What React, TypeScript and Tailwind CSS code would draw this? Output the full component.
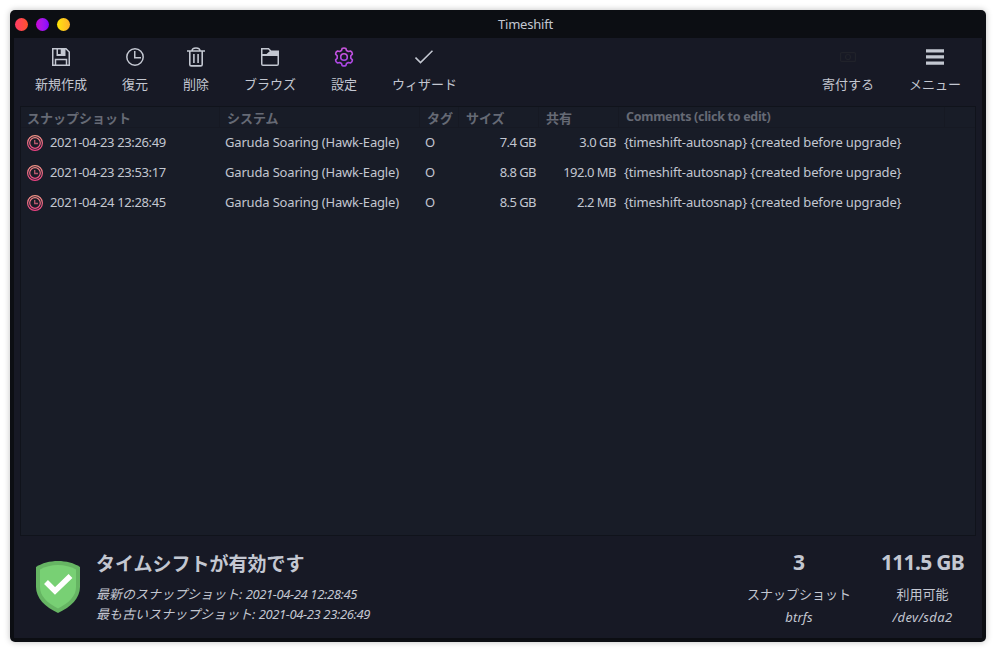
import React from 'react';

const latin = "font-['Noto_Sans','Noto_Sans_CJK_JP',sans-serif]";
const cjk = "font-['Noto_Sans_CJK_JP',sans-serif]";

function SaveIcon() {
  return (
    <svg width="18" height="18" viewBox="0 0 18 18" fill="none" stroke="currentColor" strokeWidth="1.5">
      <path d="M.75.75H14L17.25 4v13.25H.75z" />
      <path d="M3.5 17v-5.5h11V17" />
      <path d="M4.500 1h9v7h-9z" fill="currentColor" stroke="none" />
      <path d="M6 1.500h2.700V6H6z" fill="#171925" stroke="none" />
    </svg>
  );
}

function ClockIcon() {
  return (
    <svg width="18" height="18" viewBox="0 0 18 18" fill="none" stroke="currentColor" strokeWidth="1.5">
      <circle cx="9" cy="9" r="8.2" />
      <path d="M8.75 3v6.75H15" />
    </svg>
  );
}

function TrashIcon() {
  return (
    <svg width="18" height="20" viewBox="0 0 18 20" fill="none" stroke="currentColor" strokeWidth="1.6">
      <path d="M0 4h18M5 4c0-4 8-4 8 0M2.8 4v13.4c0 1 .5 1.5 1.5 1.5h9.4c1 0 1.5-.5 1.5-1.5V4M6.9 7v9M11.1 7v9" />
    </svg>
  );
}

function FolderIcon() {
  return (
    <svg width="18" height="18" viewBox="0 0 18 18" fill="none" stroke="currentColor" strokeWidth="1.5">
      <path d="M.75 16V.75H7.5L10 3.25h7.25V16q0 1.25-1.25 1.25H2Q.75 17.25.75 16z" />
      <path d="M1 6h4.5L9 3h8v5H1z" fill="currentColor" stroke="none" />
    </svg>
  );
}

function GearIcon() {
  return (
    <svg width="20" height="20" viewBox="0 0 20 20" fill="none" stroke="url(#gear)" strokeWidth="1.6" strokeLinejoin="round">
      <defs>
        <linearGradient id="gear" x1="0" y1="1" x2="0" y2="0">
          <stop stopColor="#a844e6" />
          <stop offset="1" stopColor="#c955dc" />
        </linearGradient>
      </defs>
      <path d="M8.1 1.500Q10 .5 11.900 1.500l.6 2 1.800 1 2.200-.5q1.900 1.100 1.900 3.100l-1.600 1.700v2.400l1.600 1.700q0 2-1.900 3.100l-2.200-.5-1.800 1-.6 2q-1.900 1-3.800 0l-.6-2-1.800-1-2.200.5q-1.900-1.100-1.900-3.100l1.600-1.700V8.800L1.600 7.100q0-2 1.900-3.100l2.200.5 1.800-1z" />
      <circle cx="10" cy="10" r="3.300" />
    </svg>
  );
}

function CheckIcon() {
  return (
    <svg width="18" height="14" viewBox="0 0 18 14" fill="none" stroke="currentColor" strokeWidth="1.6" className="mr-[1px]">
      <path d="M.5 7.500l5 5L17.500.700" />
    </svg>
  );
}

function CashIcon() {
  return (
    <svg width="16" height="10" viewBox="0 0 16 10" fill="none" stroke="#20222a" strokeWidth="1.200">
      <rect x=".6" y=".6" width="14.800" height="8.800" rx="1" />
      <circle cx="8" cy="5" r="2.500" />
    </svg>
  );
}

function MenuIcon() {
  return (
    <svg width="18" height="16" viewBox="0 0 18 16" fill="currentColor">
      <path d="M0 .2h18v3.300H0zM0 6.300h18v3.300H0zM0 12.400h18v3.300H0z" />
    </svg>
  );
}

function SnapshotIcon() {
  return (
    <svg width="16" height="16" viewBox="0 0 16 16" fill="none" stroke="url(#snap)" className="shrink-0">
      <defs>
        <linearGradient id="snap" gradientUnits="userSpaceOnUse" x1="0" y1="0" x2="0" y2="16">
          <stop stopColor="#ee9585" />
          <stop offset="1" stopColor="#ed3f83" />
        </linearGradient>
      </defs>
      <circle cx="8" cy="8" r="7.400" strokeWidth="1.200" />
      <circle cx="8" cy="8" r="5.300" strokeWidth="1.200" />
      <path d="M7.700 5v3.500H11" strokeWidth="1.300" opacity=".75" />
    </svg>
  );
}

function ShieldIcon() {
  return (
    <svg width="44" height="52" viewBox="0 0 44 52">
      <path d="M0 6C12-2 32-2 44 6v20c0 11-9 20-22 26C9 46 0 37 0 26z" fill="#66b563" />
      <path d="M4 8.500c10-6 26-6 36 0V26c0 9-7 16-18 21.500C11 42 4 35 4 26z" fill="#78d074" />
      <path d="M10 21l9 9 15.500-15" fill="none" stroke="#fff" strokeWidth="5.500" />
    </svg>
  );
}

function ToolButton({ label, children }: { label: string; children: React.ReactNode }) {
  return (
    <button className="flex flex-col items-center">
      <span className="flex h-[38px] items-center justify-center">{children}</span>
      <span className={`${cjk} text-[13px] leading-4 whitespace-nowrap`}>{label}</span>
    </button>
  );
}

const columns = 'grid grid-cols-[199px_200px_39px_80px_80px_326px_1fr]';
const headings = ['スナップショット', 'システム', 'タグ', 'サイズ', '共有'];

const snapshots = [
  { date: '2021-04-23 23:26:49', size: '7.4 GB', shared: '3.0 GB' },
  { date: '2021-04-23 23:53:17', size: '8.8 GB', shared: '192.0 MB' },
  { date: '2021-04-24 12:28:45', size: '8.5 GB', shared: '2.2 MB' },
];

export default function App() {
  return (
    <div className="h-[652px] w-[996px] bg-white p-2.5">
      <div className={`${latin} flex h-[632px] flex-col overflow-hidden rounded-[5px] bg-[#0c0e13] px-1 pb-1 text-[13px] text-[#c3c7d1] shadow-[0_0_6px_rgba(0,0,0,0.25)]`}>
        <header className="grid h-7 shrink-0 grid-cols-3 items-center">
          <div className="flex gap-2 pl-[1px]">
            <i className="size-[13px] rounded-full bg-linear-to-r from-[#ff3b64] to-[#ff5226]" />
            <i className="size-[13px] rounded-full bg-linear-to-r from-[#c800d8] to-[#8500ff]" />
            <i className="size-[13px] rounded-full bg-linear-to-r from-[#ffe600] to-[#ffaf28]" />
          </div>
          <h1 className="pl-[55px] text-center text-[13px] leading-5 tracking-[-0.200px]">Timeshift</h1>
        </header>

        <div className="flex grow flex-col bg-[#171925] px-1.5">
          <nav className="flex h-[68px] shrink-0 justify-between pr-[15px] pl-[15px]">
            <div className="flex gap-[35px]">
              <ToolButton label="新規作成"><SaveIcon /></ToolButton>
              <ToolButton label="復元"><ClockIcon /></ToolButton>
              <ToolButton label="削除"><TrashIcon /></ToolButton>
              <ToolButton label="ブラウズ"><FolderIcon /></ToolButton>
              <ToolButton label="設定"><GearIcon /></ToolButton>
              <ToolButton label="ウィザード"><CheckIcon /></ToolButton>
            </div>
            <div className="flex gap-[35px]">
              <ToolButton label="寄付する"><CashIcon /></ToolButton>
              <ToolButton label="メニュー"><MenuIcon /></ToolButton>
            </div>
          </nav>

          <main className="h-[430px] shrink-0 border border-[#10131b] bg-[#181c27]">
            <div className={`${columns} h-[21px] border-b border-[#161923] font-bold text-[#666a75]`}>
              {headings.map((h) => (
                <div key={h} className={`${cjk} border-r border-[#161923] pl-[7px] leading-[21px] whitespace-nowrap first:pl-1.5`}>{h}</div>
              ))}
              <div className="border-r border-[#161923] pl-[7px] text-[12.500px] leading-[19px] tracking-[-0.300px]">Comments (click to edit)</div>
            </div>
            {snapshots.map((s) => (
              <div key={s.date} className={`${columns} h-[30px] leading-[29px] whitespace-nowrap`}>
                <div className="flex items-center pl-1.5">
                  <SnapshotIcon />
                  <span className="h-[30px] pl-[7px] tracking-[-0.370px]">{s.date}</span>
                </div>
                <div className="pl-[5px] tracking-[-0.170px]">Garuda Soaring (Hawk-Eagle)</div>
                <div className="pl-[5px]">O</div>
                <div className="pr-[3px] text-right tracking-[-0.550px]">{s.size}</div>
                <div className="pr-[3px] text-right tracking-[-0.500px]">{s.shared}</div>
                <div className="pl-[5px] tracking-[-0.140px]">{'{timeshift-autosnap} {created before upgrade}'}</div>
              </div>
            ))}
          </main>

          <footer className="flex grow pt-[14px] pl-4">
            <div className="pt-[11px]"><ShieldIcon /></div>
            <div className="pl-4 whitespace-nowrap">
              <h2 className={`${cjk} text-[19px] leading-[26px] font-bold`}>タイムシフトが有効です</h2>
              <p className="mt-2 text-[13px] leading-5 italic"><span>最新のスナップショット: </span><span className="tracking-[-0.380px]">2021-04-24 12:28:45</span></p>
              <p className="text-[13px] leading-5 italic"><span>最も古いスナップショット: </span><span className="tracking-[-0.380px]">2021-04-23 23:26:49</span></p>
            </div>
            <div className="ml-auto flex gap-[30px] pr-3 text-center whitespace-nowrap">
              <div className="w-[104px]">
                <div className="text-[21px] leading-6 font-bold">3</div>
                <div className={`${cjk} mt-2.5 text-[13px] leading-5`}>スナップショット</div>
                <div className="mt-[3px] leading-5 tracking-[0.150px] italic">btrfs</div>
              </div>
              <div className="w-[83px]">
                <div className="text-[21px] leading-6 font-bold tracking-[-0.700px]">111.5 GB</div>
                <div className={`${cjk} mt-2.5 text-[13px] leading-5`}>利用可能</div>
                <div className="mt-[3px] leading-5 tracking-[0.350px] italic">/dev/sda2</div>
              </div>
            </div>
          </footer>
        </div>
      </div>
    </div>
  );
}
